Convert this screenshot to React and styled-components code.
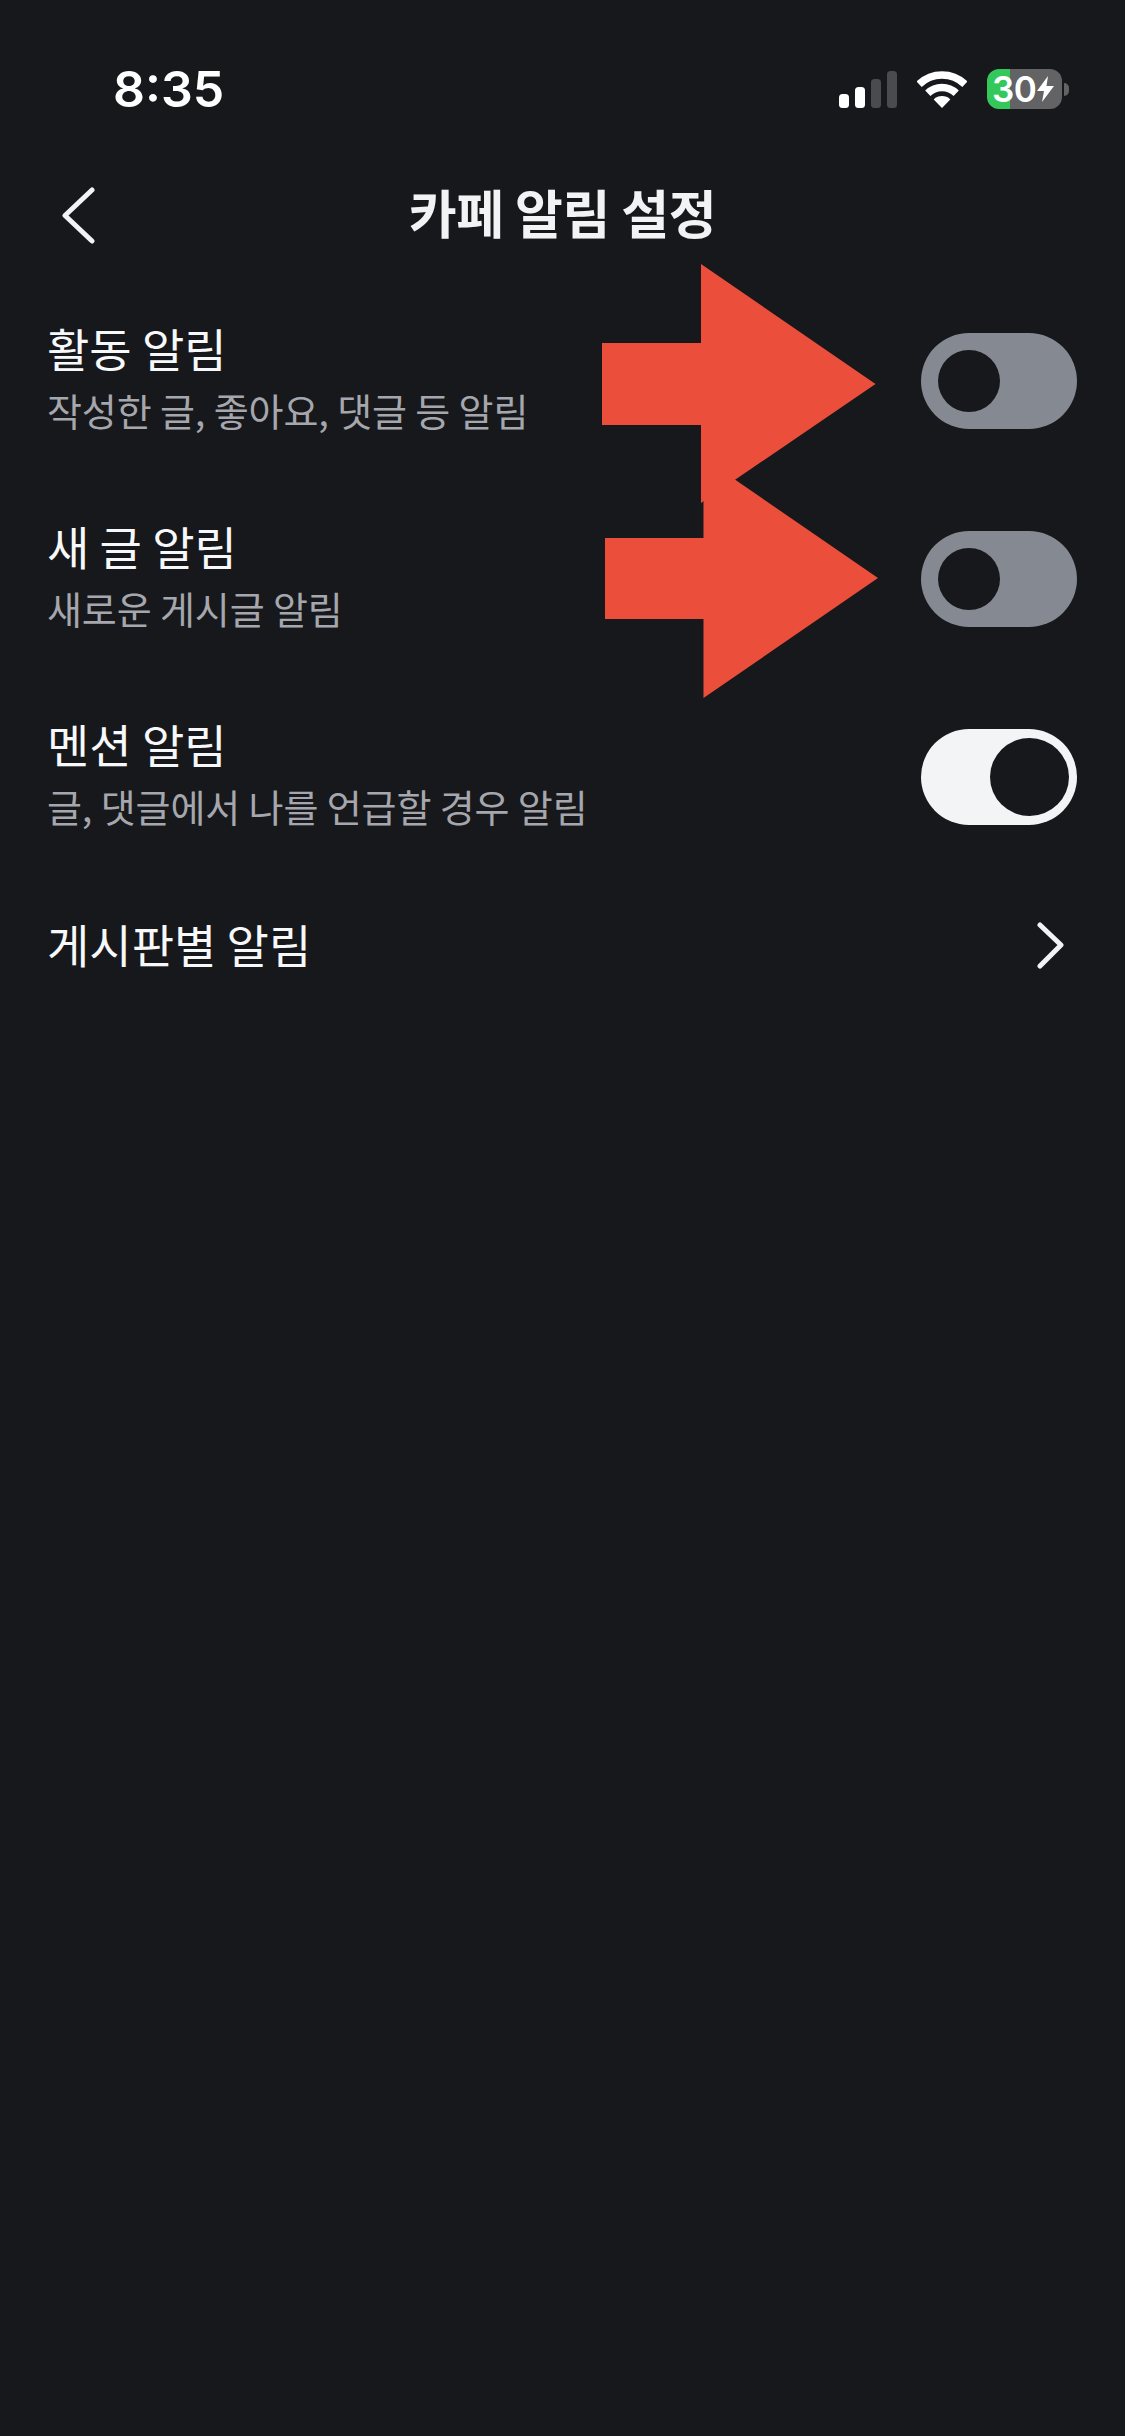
import React from 'react';
import styled, {createGlobalStyle} from 'styled-components';

const GlobalStyle = createGlobalStyle`
  html, body {
    margin: 0;
    padding: 0;
    background: #17181c;
  }
`;

const Page = styled.div`
  position: relative;
  width: 1125px;
  height: 2436px;
  overflow: hidden;
  background: #17181c;
  color: #fff;
  font-family: "Noto Sans CJK KR", "Noto Sans", sans-serif;
`;

const StatusBar = styled.div`
  display: flex;
  align-items: center;
  justify-content: space-between;
  box-sizing: border-box;
  height: 176px;
  padding: 2px 56px 0 113px;
`;

const Time = styled.span`
  font-family: Inter, "Liberation Sans", sans-serif;
  font-size: 50px;
  font-weight: 600;
  line-height: 1;
`;

const StatusIcons = styled.div`
  display: flex;
  align-items: center;
  gap: 20px;
`;

const Battery = styled.div`
  display: flex;
  align-items: center;
  gap: 2px;
`;

const BatteryBody = styled.div`
  display: flex;
  align-items: center;
  justify-content: flex-start;
  box-sizing: border-box;
  width: 75px;
  height: 40px;
  padding-left: 5px;
  border-radius: 12px;
  background: linear-gradient(to right, #34c759 ${(p) => p.$level}px, #636366 ${(p) => p.$level}px);
  font-family: Inter, "Liberation Sans", sans-serif;
  font-size: 35px;
  font-weight: 600;
  line-height: 1;
  letter-spacing: -0.5px;
`;

const BatteryNub = styled.div`
  width: 5px;
  height: 13px;
  border-radius: 0 6px 6px 0;
  background: #636366;
`;

const Header = styled.div`
  position: relative;
  display: flex;
  align-items: center;
  justify-content: center;
  height: 88px;
  margin-top: -8px;
`;

const Title = styled.h1`
  margin: 0;
  font-size: 52px;
  font-weight: 700;
  letter-spacing: -0.4px;
  line-height: 1;
  color: #f2f3f5;
`;

const BackButton = styled.div`
  position: absolute;
  left: 62px;
  top: 19px;
  display: flex;
`;

const List = styled.div`
  display: flex;
  flex-direction: column;
  margin-top: 26px;
`;

const Row = styled.div`
  display: flex;
  align-items: center;
  justify-content: space-between;
  box-sizing: border-box;
  height: ${(p) => (p.$short ? 138 : 198)}px;
  padding: 0 ${(p) => (p.$short ? 61 : 48)}px 0 47px;
`;

const RowText = styled.div`
  display: flex;
  flex-direction: column;
  gap: 12px;
  margin-top: -10px;
`;

const RowTitle = styled.div`
  font-size: 46px;
  font-weight: 400;
  line-height: 56px;
  color: #f7f8fa;
`;

const LinkTitle = styled(RowTitle)`
  margin-top: -4px;
`;

const RowSub = styled.div`
  font-size: 38px;
  font-weight: 400;
  letter-spacing: -0.1px;
  line-height: 46px;
  color: #a5a7ad;
`;

const Toggle = styled.div`
  display: flex;
  align-items: center;
  justify-content: ${(p) => (p.$on ? 'flex-end' : 'flex-start')};
  box-sizing: border-box;
  width: 156px;
  height: 96px;
  padding: 0 ${(p) => (p.$on ? 8 : 17)}px;
  border-radius: 48px;
  background: ${(p) => (p.$on ? '#f3f4f6' : '#858992')};
`;

const Knob = styled.div`
  width: ${(p) => (p.$on ? 79 : 62)}px;
  height: ${(p) => (p.$on ? 78 : 62)}px;
  border-radius: 50%;
  background: #17181c;
`;

const Arrows = styled.svg`
  position: absolute;
  left: 600px;
  top: 260px;
`;

function SignalIcon() {
  return (
    <svg width="58" height="37" viewBox="0 0 58 37">
      <rect x="0" y="23" width="10" height="14" rx="3.5" fill="#fff"/>
      <rect x="16" y="16" width="10" height="21" rx="3.5" fill="#fff"/>
      <rect x="32" y="8" width="10" height="29" rx="3.5" fill="#4a4b4f"/>
      <rect x="48" y="0" width="10" height="37" rx="3.5" fill="#4a4b4f"/>
    </svg>
  );
}

function WifiIcon() {
  return (
    <svg width="50" height="37" viewBox="0 0 50 37" fill="none">
      <path d="M2.1 13.3A33 33 0 0 1 47.9 13.3" stroke="#fff" strokeWidth="7.5"/>
      <path d="M10.8 22.3A20.5 20.5 0 0 1 39.2 22.3" stroke="#fff" strokeWidth="7.5"/>
      <path d="M25 37L16.7 28.4A12 12 0 0 1 33.3 28.4Z" fill="#fff"/>
    </svg>
  );
}

function BoltIcon() {
  return (
    <svg width="17" height="26" viewBox="0 0 17 26" style={{marginLeft: 1}}>
      <path d="M11 0L0 15H7L5 26L17 10H9.5Z" fill="#fff"/>
    </svg>
  );
}

function Chevron({left, width, height}) {
  const d = left ? 'M30 3L3 28.5L30 54' : 'M3 3L24 23L3 44';
  return (
    <svg width={width} height={height} viewBox={`0 0 ${width} ${height}`} fill="none">
      <path d={d} stroke="#f2f3f5" strokeWidth="5" strokeLinecap="round" strokeLinejoin="round"/>
    </svg>
  );
}

const rows = [
  {title: '활동 알림', sub: '작성한 글, 좋아요, 댓글 등 알림', on: false},
  {title: '새 글 알림', sub: '새로운 게시글 알림', on: false},
  {title: '멘션 알림', sub: '글, 댓글에서 나를 언급할 경우 알림', on: true},
];

export default function App() {
  return (
    <Page>
      <GlobalStyle/>
      <StatusBar>
        <Time>8:35</Time>
        <StatusIcons>
          <SignalIcon/>
          <WifiIcon/>
          <Battery>
            <BatteryBody $level={23}>
              30
              <BoltIcon/>
            </BatteryBody>
            <BatteryNub/>
          </Battery>
        </StatusIcons>
      </StatusBar>
      <Header>
        <BackButton>
          <Chevron left width={33} height={57}/>
        </BackButton>
        <Title>카페 알림 설정</Title>
      </Header>
      <List>
        {rows.map((row) => (
          <Row key={row.title}>
            <RowText>
              <RowTitle>{row.title}</RowTitle>
              <RowSub>{row.sub}</RowSub>
            </RowText>
            <Toggle $on={row.on}>
              <Knob $on={row.on}/>
            </Toggle>
          </Row>
        ))}
        <Row $short>
          <LinkTitle>게시판별 알림</LinkTitle>
          <Chevron width={27} height={47}/>
        </Row>
      </List>
      <Arrows width="290" height="445" viewBox="600 260 290 445" fill="#eb4f3c">
        <polygon points="602,343 701,343 701,264 875.5,384 701,503 701,425 602,425"/>
        <polygon points="605,538 703.5,538 703.5,458 878,578 703.5,698 703.5,619 605,619"/>
      </Arrows>
    </Page>
  );
}
